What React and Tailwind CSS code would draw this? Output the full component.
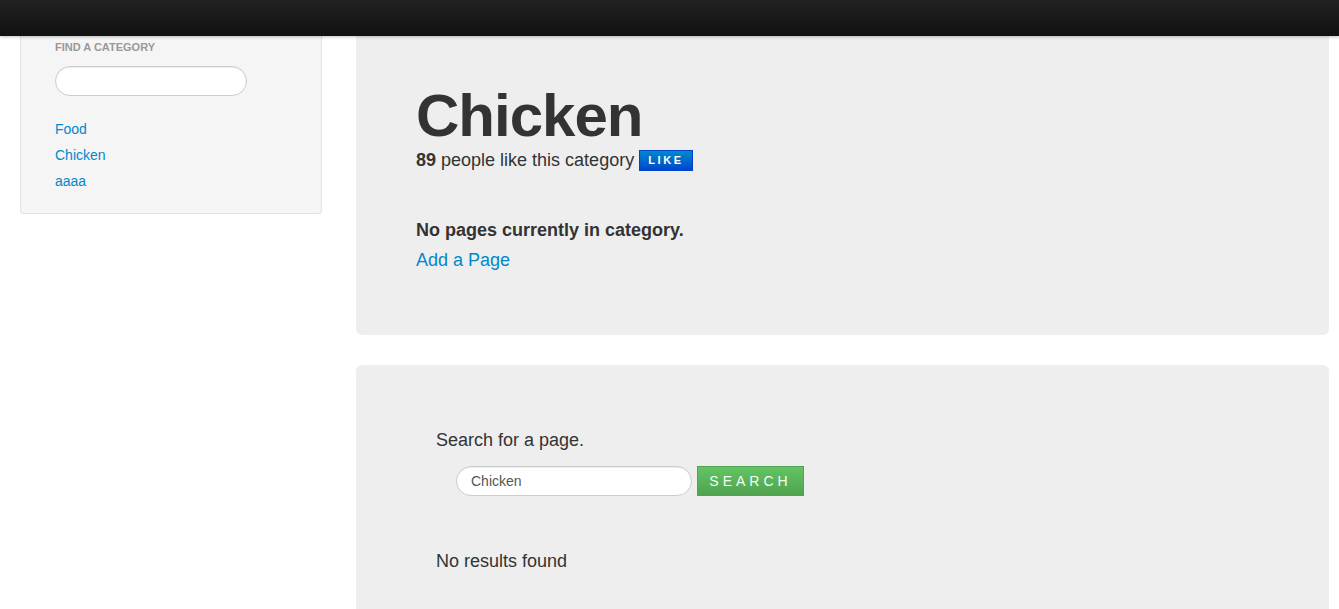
const categories = ['Food', 'Chicken', 'aaaa'];

const Sidebar = () => (
  <div className="w-[302px] shrink-0 self-start rounded-b-[4px] border border-t-0 border-[#e3e3e3] bg-[#f5f5f5] px-[19px] pb-[19px] pt-[37px] shadow-[inset_0_1px_1px_rgba(0,0,0,0.05)]">
    <div className="px-[15px]">
      <div className="text-[11px] font-bold uppercase leading-[20px] text-[#999]">Find a category</div>
      <input
        type="text"
        className="mt-[9px] block h-[30px] w-[192px] rounded-full border border-[#ccc] bg-white px-[12px] text-[14px] outline-none shadow-[inset_0_1px_1px_rgba(0,0,0,0.075)]"
      />
      <ul className="mt-[20px]">
        {categories.map((c) => (
          <li key={c} className="text-[14px] leading-[26px] text-[#0088cc]">
            {c}
          </li>
        ))}
      </ul>
    </div>
  </div>
);

const App = () => {
  return (
    <div className="relative min-h-[609px] w-full overflow-hidden bg-white font-['Liberation_Sans',Arial,sans-serif] text-[#333]">
      {/* fixed navbar */}
      <div className="absolute left-0 right-0 top-0 z-10 h-[36px] bg-gradient-to-b from-[#222] to-[#111] shadow-[0_1px_3px_rgba(0,0,0,0.25)]" />

      <div className="flex gap-[34px] pl-[20px] pr-[10px]">
        <Sidebar />

        <div className="flex flex-1 flex-col gap-[30px]">
          {/* category hero */}
          <div className="rounded-b-[6px] bg-[#eeeeee] px-[60px] pb-[60px] pt-[86px]">
            <h1 className="text-[60px] font-bold leading-[60px] tracking-[-1px] text-[#333]">Chicken</h1>
            <p className="-mt-[1px] flex items-center text-[18px] leading-[30px]">
              <strong className="font-bold">89</strong>
              <span className="ml-[5px]">people like this category</span>
              <button className="ml-[5px] h-[21px] border border-[#0044cc] bg-gradient-to-b from-[#0088cc] to-[#0044cc] px-[8px] text-[11px] font-bold leading-[19px] tracking-[2.6px] text-white">
                LIKE
              </button>
            </p>
            <p className="mt-[40px] text-[18px] font-bold leading-[30px]">No pages currently in category.</p>
            <p className="text-[18px] leading-[30px] text-[#0088cc]">Add a Page</p>
          </div>

          {/* search hero */}
          <div className="min-h-[260px] rounded-t-[6px] bg-[#eeeeee] px-[80px] pt-[60px]">
            <p className="text-[18px] leading-[30px]">Search for a page.</p>
            <div className="ml-[20px] mt-[11px] flex items-center gap-[5px]">
              <input
                type="text"
                defaultValue="Chicken"
                className="h-[30px] w-[236px] rounded-full border border-[#ccc] bg-white px-[14px] text-[14px] text-[#555] outline-none shadow-[inset_0_1px_1px_rgba(0,0,0,0.075)]"
              />
              <button className="h-[30px] w-[107px] border border-[#51a351] bg-gradient-to-b from-[#62c462] to-[#51a351] text-[14px] leading-[28px] tracking-[4px] text-[#f4fff4]">
                SEARCH
              </button>
            </div>
            <p className="mt-[50px] text-[18px] leading-[30px]">No results found</p>
          </div>
        </div>
      </div>
    </div>
  );
};

export default App;
